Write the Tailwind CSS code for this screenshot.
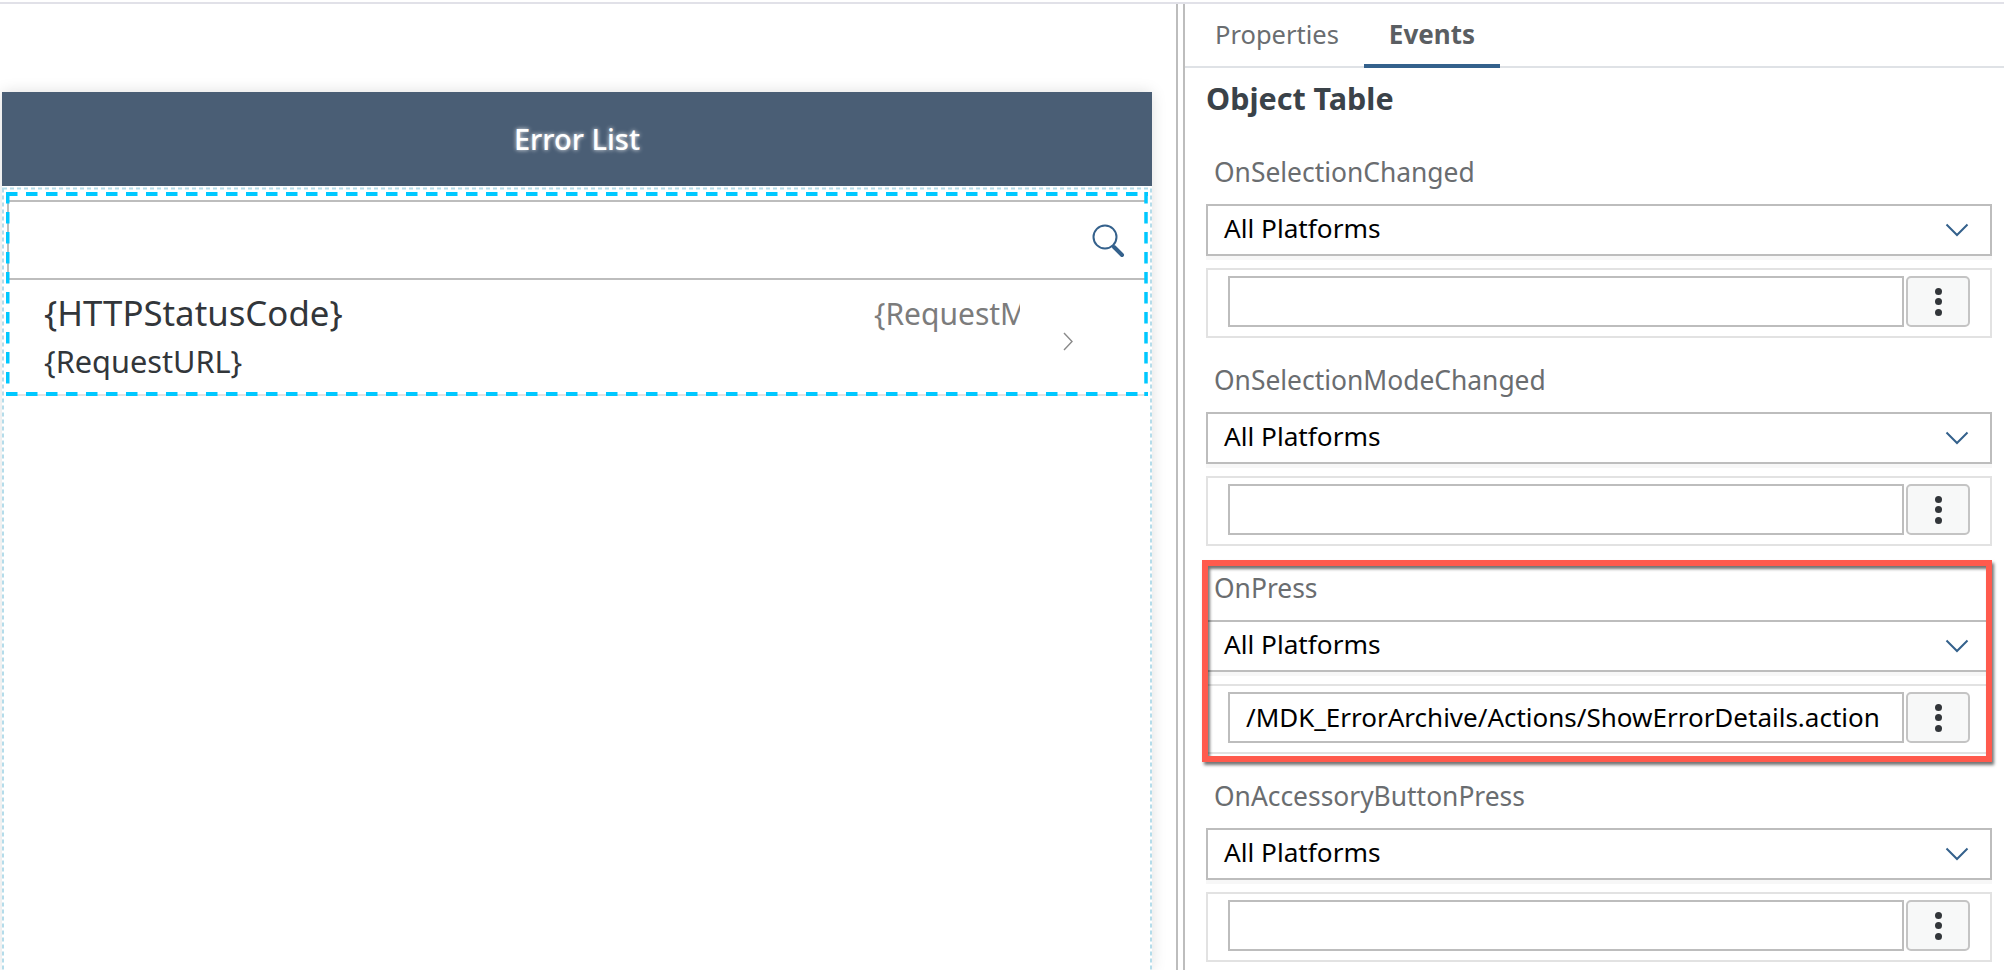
<!DOCTYPE html>
<html lang="en">
<head>
    <meta charset="UTF-8">
    <title>Error List - Object Table Events</title>
    <script src="https://cdn.jsdelivr.net/npm/@tailwindcss/browser@4"></script>
</head>
<body class="bg-white font-['Noto_Sans',sans-serif]">
<div class="relative w-[2004px] h-[970px] overflow-hidden pt-[2px]">
    <div class="h-[2px] bg-[#e1e1e8]"></div>
    <div class="flex h-[966px]">
        <!-- Canvas -->
        <div class="w-[1174px] shrink-0 pl-[2px] pt-[88px]">
            <div class="w-[1150px] h-[878px] shadow-[0_0_14px_rgba(0,0,0,0.13)] bg-white">
                <div class="h-[94px] bg-[#4a5e75] flex items-center justify-center text-white text-[29px] font-medium [text-shadow:0_0_4px_rgba(255,255,255,0.9)]">Error List</div>
                <div class="relative h-[784px] pt-[14px] pl-[5px] pr-[7px]">
                    <div class="h-[80px] border-2 border-r-0 border-[#bdbdbd] flex items-center justify-end pr-[20px]">
                        <svg class="w-[34px] h-[34px] mt-[2px]" viewBox="0 0 34 34" fill="none">
                            <circle cx="14" cy="13" r="11.5" stroke="#34618c" stroke-width="2"/>
                            <path d="M23 23l8 8" stroke="#34618c" stroke-width="4" stroke-linecap="round"/>
                        </svg>
                    </div>
                    <div class="flex h-[116px] border-b-2 border-[#e3e3e3] pl-[37px]">
                        <div class="w-[830px] shrink-0 pt-[9px]">
                            <div class="text-[34.8px] leading-[48px] text-[#32363a]">{HTTPStatusCode}</div>
                            <div class="text-[30.7px] leading-[42px] mt-[3px] text-[#32363a]">{RequestURL}</div>
                        </div>
                        <div class="w-[146px] overflow-hidden whitespace-nowrap text-[30px] leading-[42px] pt-[13px] text-[#7c7c7c]">{RequestMethod}</div>
                        <div class="flex items-center pl-[43px] pt-[8px]">
                            <svg class="w-[10px] h-[19px]" viewBox="0 0 10 19" fill="none"><path d="M1 1l8 8.5-8 8.5" stroke="#8a8a8a" stroke-width="1.4"/></svg>
                        </div>
                    </div>
                    <!-- selection outlines drawn over the list -->
                    <svg class="absolute left-0 top-0 w-[1150px] h-[784px]" viewBox="0 0 1150 784" fill="none">
                        <rect x="1" y="2.5" width="1148" height="800" stroke="#b4dcea" stroke-width="2" stroke-dasharray="4 3"/>
                        <g stroke="#00c8ff" stroke-width="4" stroke-dasharray="11.5 8.5">
                            <path d="M4 8H1146"/>
                            <path d="M4 208H1146"/>
                        </g>
                        <g stroke="#00c8ff" stroke-width="3.5" stroke-dasharray="11.5 8.5">
                            <path d="M5.75 6V210"/>
                            <path d="M1144 6V210"/>
                        </g>
                    </svg>
                </div>
            </div>
        </div>
        <!-- Splitter -->
        <div class="w-[9px] ml-[2px] shrink-0 flex justify-between border-l-2 border-[#bdbdbd]">
            <div></div>
            <div class="w-[2px] bg-[#bdbdbd]"></div>
        </div>
        <!-- Side panel -->
        <div class="flex-1">
            <div class="flex h-[64px] border-b-2 border-[#dfe2e6] pl-[5px]">
                <div class="px-[25px] h-[62px] leading-[60px] text-[25.5px] text-[#6a6d70]">Properties</div>
                <div class="px-[25px] h-[64px] border-b-[4px] border-[#34618c] leading-[60px] text-[26px] font-bold text-[#5a5e62]">Events</div>
            </div>
            <div class="pl-[21px] pr-[12px]">
                <div class="h-[62px] pt-[10px] text-[30.5px] leading-[40px] font-bold text-[#3a4249]">Object Table</div>

                <div class="h-[208px]">
                    <div class="h-[74px] flex items-end pl-[8px] pb-[15px] text-[26.4px] leading-[34px] text-[#6a6d70]">OnSelectionChanged</div>
                    <div class="h-[52px] border-2 border-[#bdbdbd] flex items-center justify-between pl-[16px] pr-[21px] text-[26.2px] text-black">
                        <span class="-mt-[2px]">All Platforms</span>
                        <svg class="w-[24px] h-[14px]" viewBox="0 0 24 14" fill="none"><path d="M1.5 1.5L12 12 22.5 1.5" stroke="#34618c" stroke-width="2"/></svg>
                    </div>
                    <div class="h-[4px] bg-[#f7f7f7]"></div>
                    <div class="mt-[8px] h-[70px] border-2 border-[#e2e2e2] flex items-start pt-[6px] pl-[20px]">
                        <div class="w-[676px] h-[51px] border-2 border-[#bdbdbd]"></div>
                        <div class="ml-[2px] w-[64px] h-[51px] rounded-[5px] border-2 border-[#c4c4c4] bg-[#f7f8f8] flex flex-col items-center justify-center gap-[3.5px]">
                            <span class="w-[7px] h-[7px] rounded-full bg-[#32363a]"></span><span class="w-[7px] h-[7px] rounded-full bg-[#32363a]"></span><span class="w-[7px] h-[7px] rounded-full bg-[#32363a]"></span>
                        </div>
                    </div>
                </div>

                <div class="h-[208px]">
                    <div class="h-[74px] flex items-end pl-[8px] pb-[15px] text-[26.4px] leading-[34px] text-[#6a6d70]">OnSelectionModeChanged</div>
                    <div class="h-[52px] border-2 border-[#bdbdbd] flex items-center justify-between pl-[16px] pr-[21px] text-[26.2px] text-black">
                        <span class="-mt-[2px]">All Platforms</span>
                        <svg class="w-[24px] h-[14px]" viewBox="0 0 24 14" fill="none"><path d="M1.5 1.5L12 12 22.5 1.5" stroke="#34618c" stroke-width="2"/></svg>
                    </div>
                    <div class="h-[4px] bg-[#f7f7f7]"></div>
                    <div class="mt-[8px] h-[70px] border-2 border-[#e2e2e2] flex items-start pt-[6px] pl-[20px]">
                        <div class="w-[676px] h-[51px] border-2 border-[#bdbdbd]"></div>
                        <div class="ml-[2px] w-[64px] h-[51px] rounded-[5px] border-2 border-[#c4c4c4] bg-[#f7f8f8] flex flex-col items-center justify-center gap-[3.5px]">
                            <span class="w-[7px] h-[7px] rounded-full bg-[#32363a]"></span><span class="w-[7px] h-[7px] rounded-full bg-[#32363a]"></span><span class="w-[7px] h-[7px] rounded-full bg-[#32363a]"></span>
                        </div>
                    </div>
                </div>

                <div class="h-[208px]">
                    <div class="h-[74px] flex items-end pl-[8px] pb-[15px] text-[26.4px] leading-[34px] text-[#6a6d70]">OnPress</div>
                    <div class="h-[52px] border-2 border-[#bdbdbd] flex items-center justify-between pl-[16px] pr-[21px] text-[26.2px] text-black">
                        <span class="-mt-[2px]">All Platforms</span>
                        <svg class="w-[24px] h-[14px]" viewBox="0 0 24 14" fill="none"><path d="M1.5 1.5L12 12 22.5 1.5" stroke="#34618c" stroke-width="2"/></svg>
                    </div>
                    <div class="h-[4px] bg-[#f7f7f7]"></div>
                    <div class="mt-[8px] h-[70px] border-2 border-[#e2e2e2] flex items-start pt-[6px] pl-[20px]">
                        <div class="w-[676px] h-[51px] border-2 border-[#bdbdbd] flex items-center pl-[16px] text-[26px] whitespace-nowrap text-black">/MDK_ErrorArchive/Actions/ShowErrorDetails.action</div>
                        <div class="ml-[2px] w-[64px] h-[51px] rounded-[5px] border-2 border-[#c4c4c4] bg-[#f7f8f8] flex flex-col items-center justify-center gap-[3.5px]">
                            <span class="w-[7px] h-[7px] rounded-full bg-[#32363a]"></span><span class="w-[7px] h-[7px] rounded-full bg-[#32363a]"></span><span class="w-[7px] h-[7px] rounded-full bg-[#32363a]"></span>
                        </div>
                    </div>
                </div>

                <div class="h-[208px]">
                    <div class="h-[74px] flex items-end pl-[8px] pb-[15px] text-[26.4px] leading-[34px] text-[#6a6d70]">OnAccessoryButtonPress</div>
                    <div class="h-[52px] border-2 border-[#bdbdbd] flex items-center justify-between pl-[16px] pr-[21px] text-[26.2px] text-black">
                        <span class="-mt-[2px]">All Platforms</span>
                        <svg class="w-[24px] h-[14px]" viewBox="0 0 24 14" fill="none"><path d="M1.5 1.5L12 12 22.5 1.5" stroke="#34618c" stroke-width="2"/></svg>
                    </div>
                    <div class="h-[4px] bg-[#f7f7f7]"></div>
                    <div class="mt-[8px] h-[70px] border-2 border-[#e2e2e2] flex items-start pt-[6px] pl-[20px]">
                        <div class="w-[676px] h-[51px] border-2 border-[#bdbdbd]"></div>
                        <div class="ml-[2px] w-[64px] h-[51px] rounded-[5px] border-2 border-[#c4c4c4] bg-[#f7f8f8] flex flex-col items-center justify-center gap-[3.5px]">
                            <span class="w-[7px] h-[7px] rounded-full bg-[#32363a]"></span><span class="w-[7px] h-[7px] rounded-full bg-[#32363a]"></span><span class="w-[7px] h-[7px] rounded-full bg-[#32363a]"></span>
                        </div>
                    </div>
                </div>
            </div>
        </div>
    </div>
    <!-- Red annotation round the OnPress block -->
    <div class="absolute left-[1202px] top-[560px] w-[790px] h-[202px] border-[6px] border-[#ff5a4d] shadow-[2px_3px_3px_rgba(0,0,0,0.55),inset_2px_3px_3px_rgba(0,0,0,0.55)]"></div>
</div>
</body>
</html>
